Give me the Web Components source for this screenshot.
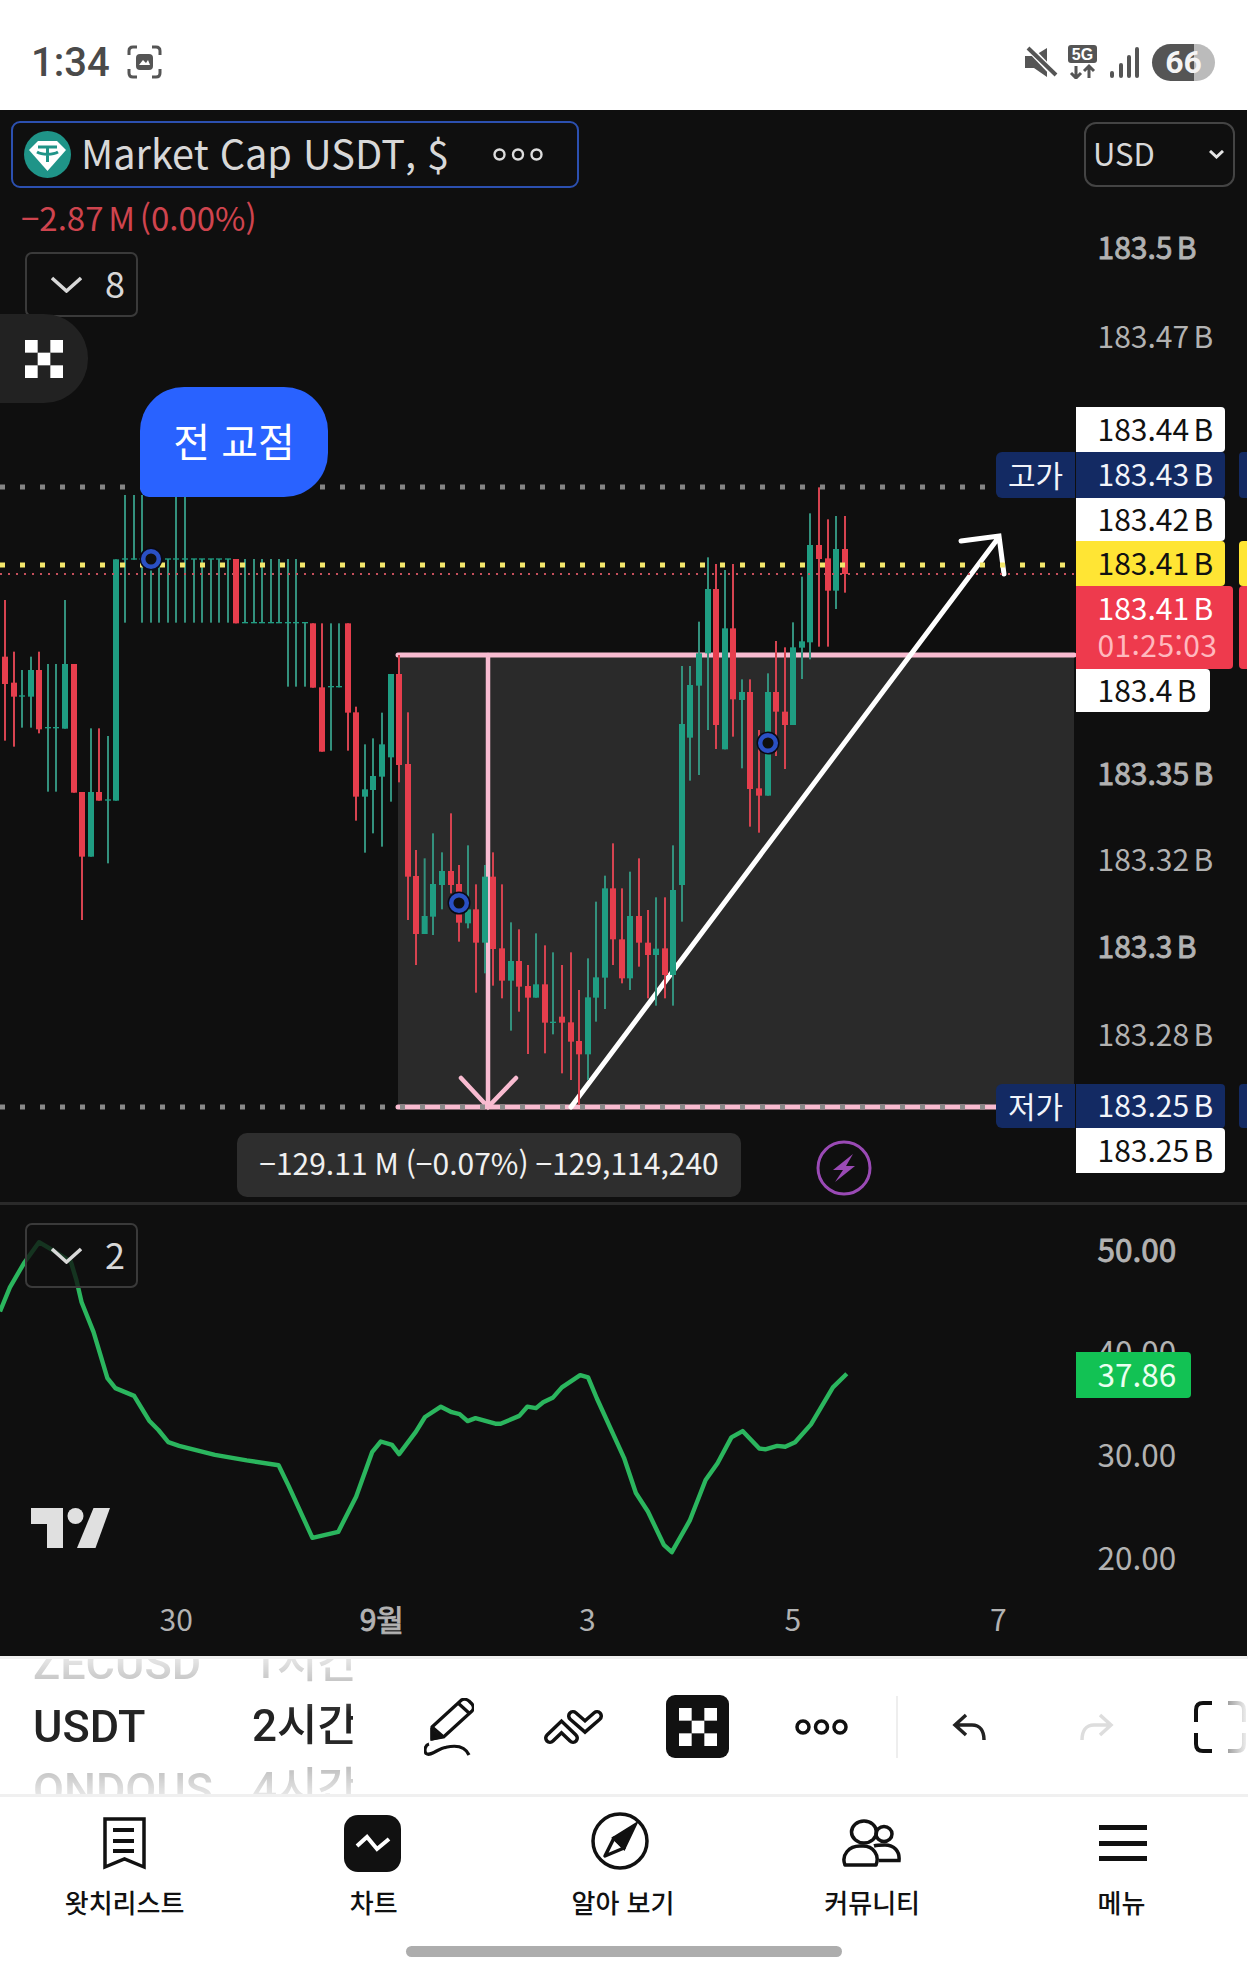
<!DOCTYPE html>
<html lang="ko">
<head>
<meta charset="utf-8">
<title>Market Cap USDT</title>
<style>
  html, body { margin: 0; background: #fff; }
  body { width: 1248px; font-family: "Noto Sans CJK KR", "Noto Sans", sans-serif; }
</style>
</head>
<body>
<status-bar></status-bar>
<chart-screen>
  <main-pane>
    <price-axis slot="axis">
      <currency-select></currency-select>
      <price-tag strong style="margin-top:39px">183.5 B</price-tag>
      <price-tag style="margin-top:45px">183.47 B</price-tag>
      <price-tag kind="white" h="45" style="margin-top:48px">183.44 B</price-tag>
      <price-tag kind="blue" h="46" side="고가" mark>183.43 B</price-tag>
      <price-tag kind="white" h="43">183.42 B</price-tag>
      <price-tag kind="yellow" h="45" mark>183.41 B</price-tag>
      <price-tag kind="red" h="83" w="157" sub="01:25:03" mark>183.41 B</price-tag>
      <price-tag kind="white" h="43" w="134">183.4 B</price-tag>
      <price-tag strong style="margin-top:40px">183.35 B</price-tag>
      <price-tag style="margin-top:42px">183.32 B</price-tag>
      <price-tag strong style="margin-top:43px">183.3 B</price-tag>
      <price-tag style="margin-top:44px">183.28 B</price-tag>
      <price-tag kind="blue" h="44" side="저가" mark style="margin-top:27px">183.25 B</price-tag>
      <price-tag kind="white" h="45">183.25 B</price-tag>
    </price-axis>
  </main-pane>
  <rsi-pane>
    <price-axis slot="axis" style="--tag-font:31.5px">
      <price-tag strong style="margin-top:23px">50.00</price-tag>
      <price-tag style="margin-top:58px">40.00</price-tag>
      <price-tag kind="green" h="46" w="115" style="position:absolute;top:147px;left:0">37.86</price-tag>
      <price-tag style="margin-top:59px">30.00</price-tag>
      <price-tag style="margin-top:59px">20.00</price-tag>
    </price-axis>
  </rsi-pane>
  <time-axis>
    <span>30</span><span class="b">9월</span><span>3</span><span>5</span><span>7</span>
  </time-axis>
</chart-screen>
<draw-toolbar></draw-toolbar>
<tab-bar>
  <tab-item label="왓치리스트">
    <svg width="43" height="53" viewBox="0 0 43 53" fill="none" stroke="#111"><path d="M2 2H41V50L21.5 42 2 50Z" stroke-width="3.5"/><path d="M10 13H31M10 24H31M10 34H31" stroke-width="4"/></svg>
  </tab-item>
  <tab-item label="차트">
    <svg style="margin-right:2px" width="57" height="57" viewBox="0 0 57 57"><rect width="57" height="57" rx="14" fill="#111"/><path d="M13 31 23 22 33 34 45 24" fill="none" stroke="#fff" stroke-width="4"/></svg>
  </tab-item>
  <tab-item label="알아 보기">
    <svg style="margin:0 5px 5px 0" width="58" height="58" viewBox="0 0 58 58" fill="none" stroke="#111" stroke-width="3.5"><circle cx="29" cy="29" r="27"/><path d="M44 13 23 26 33 36Z" fill="#111"/><path d="M23 26 14 44 33 36Z" stroke-linejoin="round"/></svg>
  </tab-item>
  <tab-item label="커뮤니티">
    <svg style="margin-right:2px" width="60" height="48" viewBox="0 0 60 48" fill="none" stroke="#111" stroke-width="3.5"><ellipse cx="23" cy="13" rx="12.5" ry="11"/><ellipse cx="43" cy="15" rx="8" ry="7.5"/><path d="M4 46C0 36 8 27 19 27H22C32 27 39 36 35 46Z" stroke-linejoin="round"/><path d="M33 27C36 26 39 26 44 26 53 26 59 32 58 41.5H38"/></svg>
  </tab-item>
  <tab-item label="메뉴">
    <svg style="margin-left:3px" width="48" height="37" viewBox="0 0 48 37" fill="#111"><rect width="48" height="5"/><rect y="16" width="48" height="5"/><rect y="31" width="48" height="5"/></svg>
  </tab-item>
</tab-bar>
<script>
const OKX_SQUARES = '<rect width="1" height="1"/><rect x="2" width="1" height="1"/><rect x="1" y="1" width="1" height="1"/><rect y="2" width="1" height="1"/><rect x="2" y="2" width="1" height="1"/>';

class StatusBar extends HTMLElement {
  connectedCallback() {
    this.attachShadow({ mode: 'open' }).innerHTML = `
    <style>
      :host { display: flex; align-items: center; height: 110px; background: #fff; color: #4a4a4a; box-sizing: border-box; padding: 14px 33px 0 31px; font-family: Roboto, sans-serif; }
      .time { font-size: 40px; font-weight: 500; line-height: 48px; width: 96px; margin-top: 2px; }
      .right { margin-left: auto; display: flex; align-items: center; }
      .batt { position: relative; width: 63px; height: 37px; border-radius: 19px; margin-left: 13px; background: linear-gradient(to right, #555 42px, #bbb 42px); color: #f4f4f4; font: 700 32px/37px Roboto, sans-serif; text-align: center; }
    </style>
    <span class="time">1:34</span>
    <svg width="35" height="34" viewBox="0 0 35 34" fill="none" stroke="#555" stroke-width="3"><path d="M10 2H6Q2 2 2 6V10M25 2H29Q33 2 33 6V10M2 24V28Q2 32 6 32H10M33 24V28Q33 32 29 32H25"/><rect x="9" y="9" width="17" height="16" rx="4" fill="#555" stroke="none"/><path d="M12 20 16 15 19 18 21 15 23 20Z" fill="#fff" stroke="none"/></svg>
    <div class="right">
      <svg width="33" height="33" viewBox="0 0 33 33"><path d="M0 10H9L22 2V31L9 22H0Z" fill="#555"/><path d="M3 1 31 30" stroke="#fff" stroke-width="7"/><path d="M3 2 31 29" stroke="#555" stroke-width="4"/></svg>
      <svg style="margin-left:10px" width="30" height="34" viewBox="0 0 30 34"><rect width="29" height="18" rx="3" fill="#555"/><text x="14.5" y="15" font-family="Liberation Sans" font-weight="700" font-size="16" fill="#fff" text-anchor="middle">5G</text><path d="M8 21V33M3 28 8 33 13 28M21 33V21M16 26 21 21 26 26" fill="none" stroke="#555" stroke-width="3"/></svg>
      <svg style="margin-left:12px" width="29" height="31" viewBox="0 0 29 31" fill="#555"><rect y="24" width="4" height="7" rx="2"/><rect x="9" y="16" width="4" height="15" rx="2"/><rect x="17" y="8" width="4" height="23" rx="2"/><rect x="25" width="4" height="31" rx="2"/></svg>
      <div class="batt">66</div>
    </div>`;
  }
}

class ChartScreen extends HTMLElement {
  connectedCallback() {
    this.attachShadow({ mode: 'open' }).innerHTML = `
    <style>
      :host { display: block; width: 1247px; background: #0f0f0f; }
      ::slotted(rsi-pane) { border-top: 3px solid #2a2a2a; }
    </style>
    <slot></slot>`;
  }
}

class CollapseChip extends HTMLElement {
  connectedCallback() {
    this.attachShadow({ mode: 'open' }).innerHTML = `
    <style>
      :host { display: flex; align-items: center; box-sizing: border-box; width: 113px; height: 65px; border: 2px solid #3a3a3a; border-radius: 7px; padding-left: 24px; color: #d8d8d8; font-size: 36px; }
      span { margin: 0 0 5px 23px; }
    </style>
    <svg width="31" height="17" viewBox="0 0 31 17" fill="none" stroke="#d8d8d8" stroke-width="3.5"><path d="M1 2 15.500 15 30 2"/></svg>
    <span><slot></slot></span>`;
  }
}

class ChartLegend extends HTMLElement {
  connectedCallback() {
    this.attachShadow({ mode: 'open' }).innerHTML = `
    <style>
      :host { display: block; position: absolute; left: 0; top: 0; padding: 11px 0 0 11px; }
      .box { display: flex; align-items: center; box-sizing: border-box; width: 568px; height: 67px; border: 2px solid #2c50b0; border-radius: 9px; padding: 0 34px 0 11px; color: #d8d8d8; font-size: 39.700px; }
      .box span { margin: 0 0 6px 10px; white-space: nowrap; }
      .box .more { margin-left: auto; }
      .change { height: 64px; line-height: 58px; margin-left: 10px; color: #cf444e; font-size: 33px; word-spacing: -4.500px; }
      collapse-chip { margin-left: 14px; }
      .float { display: flex; align-items: center; box-sizing: border-box; margin: -3px 0 0 -11px; width: 88px; height: 89px; padding-left: 25px; background: #222; border-radius: 0 44px 44px 0; }
    </style>
    <div class="box">
      <svg width="47" height="47" viewBox="0 0 47 47"><circle cx="23.500" cy="23.500" r="23.500" fill="#1f9488"/><path d="M14 10H33L42 19 23.500 40 5 19Z" fill="#fff"/><path d="M14 16H33M23.500 16V31M13 21C18 24 29 24 34 21" fill="none" stroke="#1f9488" stroke-width="3"/></svg>
      <span>Market Cap USDT, $</span>
      <svg class="more" width="50" height="13" viewBox="0 0 50 13" fill="none" stroke="#ddd" stroke-width="2.400"><circle cx="6.500" cy="6.500" r="5"/><circle cx="25" cy="6.500" r="5"/><circle cx="43.500" cy="6.500" r="5"/></svg>
    </div>
    <div class="change">−2.87 M (0.00%)</div>
    <collapse-chip>8</collapse-chip>
    <div class="float"><svg width="38" height="38" viewBox="0 0 3 3" fill="#fff">${OKX_SQUARES}</svg></div>`;
  }
}

class CurrencySelect extends HTMLElement {
  connectedCallback() {
    this.attachShadow({ mode: 'open' }).innerHTML = `
    <style>
      :host { display: flex; align-items: center; justify-content: space-between; box-sizing: border-box; width: 151px; height: 65px; margin: 12px 0 0 8px; padding: 0 9px 0 7px; border: 2px solid #444; border-radius: 12px; color: #d8d8d8; font-size: 31px; }
      span { margin-bottom: 5px; }
    </style>
    <span>USD</span>
    <svg width="15" height="9" viewBox="0 0 15 9" fill="none" stroke="#e4e4e4" stroke-width="3"><path d="M1 1 7.500 7 14 1"/></svg>`;
  }
}

class PriceAxis extends HTMLElement {
  connectedCallback() {
    this.attachShadow({ mode: 'open' }).innerHTML = `
    <style>
      :host { display: block; position: relative; width: 171px; }
    </style>
    <slot></slot>`;
  }
}

class PriceTag extends HTMLElement {
  connectedCallback() {
    const kinds = {
      white: 'background:#fff;color:#111',
      blue: 'background:#132a63;color:#f2f4fa',
      yellow: 'background:#ffe534;color:#111',
      red: 'background:#ee3a4d;color:#fff',
      green: 'background:#12c254;color:#eafff0',
    };
    const kind = this.getAttribute('kind');
    const h = this.getAttribute('h') || 44;
    const w = this.getAttribute('w') || 149;
    const side = this.getAttribute('side');
    const sub = this.getAttribute('sub');
    const bg = kind ? kinds[kind].split(';')[0].split(':')[1] : 'none';
    this.attachShadow({ mode: 'open' }).innerHTML = `
    <style>
      :host { display: block; position: relative; box-sizing: border-box; width: ${w}px; height: ${h}px; }
      .face { display: flex; flex-direction: column; justify-content: center; box-sizing: border-box; width: 100%; height: 100%; padding: 0 0 3px 21.500px; border-radius: ${kind ? '0 4px 4px 0' : '0'}; font-size: var(--tag-font, 30px); line-height: 37px; word-spacing: -4px; white-space: nowrap; color: #b2b2b2; ${this.hasAttribute('strong') ? '-webkit-text-stroke: .9px currentColor;' : ''} ${kind ? kinds[kind] : ''} }
      .sub { color: #ffb8be; letter-spacing: .4px; }
      .side { position: absolute; right: 100%; top: 0; width: 79px; height: 100%; margin-right: 1px; padding-bottom: 3px; box-sizing: border-box; display: flex; align-items: center; justify-content: center; border-radius: 6px 0 0 6px; background: ${bg}; color: #f2f4fa; font-size: 30px; }
      .mark { position: absolute; left: 163px; top: 0; width: 8px; height: 100%; border-radius: 4px 0 0 4px; background: ${bg}; }
    </style>
    ${side ? `<div class="side">${side}</div>` : ''}
    <div class="face"><div><slot></slot></div>${sub ? `<div class="sub">${sub}</div>` : ''}</div>
    ${this.hasAttribute('mark') ? '<div class="mark"></div>' : ''}`;
  }
}

// y values are read off the zoomed crops, so each group keeps its crop origin
const CANDLES = [
  [0, 470, [
    [15,'r',390,560,642,812],[42,'r',545,638,680,830],[66,'g',600,676,680,773],[93,'g',560,600,680,773],
    [117,'r',545,600,778,790],[144,'g',582,771,775,965],[168,'g',582,771,775,965],[195,'g',390,582,776,776],
    [222,'r',582,582,968,968],[246,'r',966,966,1160,1350],[273,'g',775,966,1160,1160],[297,'r',775,966,992,992],
    [324,'g',798,988,992,1180],[348,'g',268,268,992,992],[375,'g',75,265,269,458],[402,'g',75,265,269,269],
    [426,'g',75,265,269,458],[453,'g',267,265,269,458],[477,'g',267,265,269,458],[504,'g',267,265,269,458],
    [528,'g',80,265,269,458],[555,'g',80,265,269,458],[582,'g',267,265,269,458],[606,'g',267,265,269,458],
    [633,'g',267,265,269,458],[657,'g',267,265,269,458],[684,'g',267,265,269,458],[708,'r',267,267,460,460],
    [735,'g',267,456,460,458],[762,'g',267,456,460,458],[786,'g',267,456,460,458],[813,'g',267,456,460,458],
    [837,'g',267,456,460,458],[864,'g',267,456,460,650],[888,'g',267,456,460,650],[915,'g',458,456,460,650],
    [939,'r',460,460,653,653],[966,'r',460,652,845,845],[993,'g',460,648,652,842],[1017,'g',460,648,652,652],
    [1044,'r',460,460,728,842],[1068,'r',710,727,980,1052],[1095,'g',823,958,980,1148],[1119,'g',805,918,960,1090],
    [1146,'g',728,823,920,1130],[1173,'g',612,612,862,995],[1197,'r',555,612,885,937],
  ]],
  [380, 620, [
    [84,'r',277,432,770,900],[108,'r',690,768,942,1035],[134,'g',715,888,942,942],[159,'g',640,792,890,945],
    [186,'g',697,753,795,868],[213,'r',580,753,795,820],[237,'r',735,792,908,965],[264,'g',676,868,910,925],
    [288,'r',793,868,968,1118],[315,'g',735,770,968,1060],[339,'r',697,770,987,1097],[366,'r',793,985,1082,1135],
    [393,'g',907,1023,1082,1232],[417,'r',928,1023,1100,1175],[444,'r',1035,1098,1133,1302],[468,'g',940,1093,1133,1133],
    [495,'r',976,1093,1208,1300],[519,'g',997,1205,1209,1243],[546,'r',1035,1190,1208,1360],[573,'r',997,1207,1265,1380],
    [597,'r',1110,1263,1303,1455],[624,'g',1015,1132,1303,1380],[648,'g',845,1072,1133,1205],[675,'g',767,805,1073,1167],
    [699,'r',670,805,958,1035],[726,'r',805,958,1075,1090],[750,'g',755,888,1075,1110],[777,'r',715,888,968,1040],
    [804,'r',870,968,1005,1135],[828,'g',832,986,1005,1157],[855,'r',832,985,1065,1135],[879,'g',676,810,1065,1157],
    [906,'g',138,312,795,905],[930,'g',138,195,353,482],
  ]],
  [640, 470, [
    [177,'g',455,550,647,915],[204,'g',262,357,550,780],[228,'r',282,357,765,837],[255,'g',300,475,838,838],
    [279,'r',282,475,688,800],[306,'g',628,666,690,895],[330,'r',628,666,957,1070],[357,'r',780,955,977,1088],
    [384,'g',610,666,977,977],[408,'r',513,666,725,858],[435,'r',532,725,765,897],[459,'g',457,532,765,765],
    [486,'g',320,514,533,627],[510,'g',130,225,517,568],[537,'r',52,225,267,530],[564,'r',148,265,362,530],
    [588,'g',138,237,362,417],[615,'r',138,237,312,368],
  ]],
];

class CandleChart extends HTMLElement {
  connectedCallback() {
    let bars = '';
    for (const [ox, oy, list] of CANDLES) {
      for (const [x, c, hi, top, bot, lo] of list) {
        const px = ox + x / 3;
        const wick = c === 'g' ? '#33917d' : '#d64350';
        const body = c === 'g' ? '#1f9d82' : '#e63e4d';
        bars += `<rect x="${px - 1}" y="${oy + hi / 3}" width="2" height="${(lo - hi) / 3}" fill="${wick}"/>`;
        bars += `<rect x="${px - 3}" y="${oy + top / 3}" width="6" height="${Math.max(bot - top, 3) / 3}" fill="${body}"/>`;
      }
    }
    const marker = (x, y) => `<circle cx="${x}" cy="${y}" r="11.500" fill="#0a0a14"/><circle cx="${x}" cy="${y}" r="7.800" fill="#0f0f0f" stroke="#2a50c4" stroke-width="4.500"/>`;
    this.attachShadow({ mode: 'open' }).innerHTML = `
    <style>
      :host { display: block; position: absolute; left: 0; top: 0; }
      svg { display: block; }
    </style>
    <svg width="1076" height="1092" viewBox="0 110 1076 1092" fill="none">
      <rect x="398" y="655" width="676" height="452" fill="#2a2a2a"/>
      <path d="M398 655H1074" stroke="#f8bbd0" stroke-width="5" stroke-linecap="round"/>
      <path d="M398 1107H998" stroke="#f8bbd0" stroke-width="5" stroke-linecap="round"/>
      <path d="M488 655V1107M461 1078 488 1107 516 1078" stroke="#f8bbd0" stroke-width="4.500" stroke-linecap="round"/>
      <path d="M571 1107 999 537M961 541 999 536 1004 574" stroke="#fff" stroke-width="5" stroke-linecap="round"/>
      ${bars}
      <path d="M0 1107H998" stroke="#8a8a8a" stroke-width="5" stroke-dasharray="5 15"/>
      <path d="M0 487H985" stroke="#858585" stroke-width="5" stroke-dasharray="5 15"/>
      <path d="M0 574H1074" stroke="#c6505c" stroke-width="2" stroke-dasharray="2 6"/>
      <path d="M0 565H1074" stroke="#f4e86c" stroke-width="5" stroke-dasharray="5 15"/>
      ${marker(151, 559)}${marker(459, 903)}${marker(768, 743)}
    </svg>`;
  }
}

class MainPane extends HTMLElement {
  connectedCallback() {
    this.attachShadow({ mode: 'open' }).innerHTML = `
    <style>
      :host { display: grid; grid-template-columns: 1076px 171px; position: relative; height: 1092px; overflow: hidden; color: #fff; }
      .pin { position: absolute; left: 140px; top: 277px; width: 188px; height: 110px; display: flex; align-items: center; justify-content: center; box-sizing: border-box; padding-bottom: 5px; background: #2962ff; border-radius: 44px 44px 44px 9px; font-size: 40px; }
      .tip { position: absolute; left: 237px; top: 1023px; width: 504px; height: 64px; display: flex; align-items: center; justify-content: center; box-sizing: border-box; padding-bottom: 6px; background: #2e2e2e; border-radius: 10px; color: #f0f0f0; font-size: 30px; word-spacing: -1.500px; white-space: nowrap; }
      .bolt { position: absolute; left: 816px; top: 1030px; }
    </style>
    <div class="canvas"><candle-chart></candle-chart></div>
    <slot name="axis"></slot>
    <chart-legend></chart-legend>
    <div class="pin">전 교점</div>
    <div class="tip">−129.11 M (−0.07%) −129,114,240</div>
    <svg class="bolt" width="56" height="56" viewBox="0 0 56 56"><circle cx="28" cy="28" r="26" fill="none" stroke="#9a4ab5" stroke-width="3"/><path d="M37 14 17 30H27L19 42 39 26H30Z" fill="#9a4ab5"/></svg>`;
  }
}

class RsiPane extends HTMLElement {
  connectedCallback() {
    // first run is in the left crop, second in the right one
    const left = [[0,625],[25,560],[60,495],[98,438],[130,458],[178,490],[192,540],[205,600],[235,680],[270,805],[290,832],[337,853],[375,920],[398,945],[423,978],[450,988],[540,1012],[620,1027],[700,1040],[725,1095],[785,1236],[850,1220],[895,1125],[935,1005],[957,976],[985,985],[1003,1010],[1045,950],[1068,910],[1108,882],[1135,897],[1155,902],[1175,921],[1195,913],[1245,928],[1258,928],[1305,907],[1325,882],[1347,886],[1365,870],[1390,857],[1412,830],[1458,797],[1478,803],[1500,860]];
    const right = [[0,1020],[30,1115],[60,1165],[100,1255],[120,1275],[165,1190],[205,1080],[235,1035],[270,965],[298,948],[340,995],[355,997],[385,988],[405,990],[430,978],[470,930],[525,830],[560,793]];
    const pts = left.map(([x, y]) => [x / 2.513, y / 2.7 + 1080])
      .concat(right.map(([x, y]) => [624 + x / 2.513, y / 2.7 + 1080]))
      .map(p => p[0].toFixed(1) + ' ' + p[1].toFixed(1)).join(' ');
    this.attachShadow({ mode: 'open' }).innerHTML = `
    <style>
      :host { display: grid; grid-template-columns: 1076px 171px; position: relative; height: 398px; box-sizing: border-box; color: #fff; }
      svg { display: block; }
      collapse-chip { position: absolute; left: 25px; top: 18px; background: rgba(15,15,15,.78); }
      .logo { position: absolute; left: 31px; top: 303px; }
    </style>
    <svg width="1076" height="395" viewBox="0 1205 1076 395"><polyline points="${pts}" fill="none" stroke="#2bb65e" stroke-width="4.400" stroke-linejoin="round"/></svg>
    <slot name="axis"></slot>
    <collapse-chip>2</collapse-chip>
    <svg class="logo" width="79" height="40" viewBox="0 0 79 40" fill="#e0e0e0"><path d="M0 0H32V40H16V16H0Z"/><circle cx="44.500" cy="8" r="8"/><path d="M62.500 0H79L64.500 40H46Z"/></svg>`;
  }
}

class TimeAxis extends HTMLElement {
  connectedCallback() {
    this.attachShadow({ mode: 'open' }).innerHTML = `
    <style>
      :host { display: flex; height: 56px; padding-left: 73.500px; color: #b2b2b2; font-size: 30px; line-height: 36px; }
      ::slotted(span) { width: 205.500px; text-align: center; }
      ::slotted(.b) { -webkit-text-stroke: .9px currentColor; }
    </style>
    <slot></slot>`;
  }
}

class DrawToolbar extends HTMLElement {
  connectedCallback() {
    this.attachShadow({ mode: 'open' }).innerHTML = `
    <style>
      :host { display: flex; align-items: center; box-sizing: border-box; height: 141px; border-top: 3px solid #f0f0f0; border-bottom: 3px solid #f0f0f0; padding-left: 33px; background: #fff; overflow: hidden; }
      .wheel { display: flex; flex-direction: column; justify-content: center; flex: none; height: 135px; overflow: hidden; font: 500 45px/63px Roboto, "Noto Sans CJK KR", sans-serif; color: #999; white-space: nowrap;
        -webkit-mask-image: linear-gradient(to bottom, rgba(0,0,0,.25), #000 40%, #000 60%, rgba(0,0,0,.25));
        mask-image: linear-gradient(to bottom, rgba(0,0,0,.25), #000 40%, #000 60%, rgba(0,0,0,.25)); }
      .wheel div { flex: none; height: 63px; }
      .wheel .on { color: #222; }
      .sym { width: 219px; }
      .res { width: 101px; font-size: 44px; }
      svg { flex: none; display: block; }
      .sep { flex: none; width: 2px; height: 62px; margin-left: 48px; background: #eee; }
    </style>
    <div class="wheel sym"><div>ZECUSD</div><div class="on">USDT</div><div>ONDOUS</div></div>
    <div class="wheel res"><div>1시간</div><div class="on">2시간</div><div>4시간</div></div>
    <svg style="margin-left:71px" width="50" height="58" viewBox="0 0 50 58" fill="none" stroke="#111" stroke-width="3.200"><path d="M8 41V29L37.500 2Q41 0 45 3L48 6Q51 10 48 13L19.500 39Z" stroke-linejoin="round"/><path d="M8 29 19.500 39M34 5 45 15"/><path d="M8 33V41L16 39Z" fill="#111"/><path d="M5 46C1 47 0 53 2 55.500 7 59 14 50 22 49.300 32 47 41 48 45 57"/></svg>
    <svg style="margin-left:68px" width="61" height="36" viewBox="0 0 61 36" fill="none" stroke-linecap="round"><path d="M8 29 19.500 18 31 29" stroke="#111" stroke-width="12"/><path d="M8 29 19.500 18 31 29" stroke="#fff" stroke-width="5"/><path d="M31 7 43 17.500 55 7" stroke="#111" stroke-width="12"/><path d="M31 7 43 17.500 55 7" stroke="#fff" stroke-width="5"/></svg>
    <div style="margin-left:63px;width:63px;height:63px;flex:none;display:flex;align-items:center;justify-content:center;background:#111;border-radius:9px"><svg width="38" height="38" viewBox="0 0 3 3" fill="#fff">${OKX_SQUARES}</svg></div>
    <svg style="margin-left:66px" width="53" height="16" viewBox="0 0 53 16" fill="none" stroke="#111" stroke-width="3.500"><circle cx="8" cy="8" r="6"/><circle cx="26.500" cy="8" r="6"/><circle cx="45" cy="8" r="6"/></svg>
    <div class="sep"></div>
    <svg style="margin-left:54px" width="34" height="28" viewBox="0 0 34 28" fill="none" stroke="#222" stroke-width="3.500"><path d="M14 2 3 12 14 22M3 12H20C28 12 32 18 32 27"/></svg>
    <svg style="margin-left:94px" width="34" height="28" viewBox="0 0 34 28" fill="none" stroke="#ddd" stroke-width="3.500"><path d="M20 2 31 12 20 22M31 12H14C6 12 2 18 2 27"/></svg>
    <svg style="margin-left:80px" width="52" height="52" viewBox="0 0 52 52" fill="none" stroke-width="4"><defs><linearGradient id="fade" gradientUnits="userSpaceOnUse" x1="32" y1="0" x2="52" y2="0"><stop offset="0" stop-color="#999"/><stop offset="1" stop-color="#ececec"/></linearGradient></defs><path d="M18 2H9Q2 2 2 9V21M2 32V43Q2 50 9 50H18" stroke="#111"/><path d="M34 2H43Q50 2 50 9V21M50 32V43Q50 50 43 50H34" stroke="url(#fade)"/></svg>`;
  }
}

class TabBar extends HTMLElement {
  connectedCallback() {
    this.attachShadow({ mode: 'open' }).innerHTML = `
    <style>
      :host { display: block; height: 175px; background: #fff; }
      .tabs { display: grid; grid-template-columns: repeat(5, 1fr); width: 1246px; }
      .home { width: 436px; height: 11px; margin: 26px auto 0 406px; border-radius: 6px; background: #adadad; }
    </style>
    <div class="tabs"><slot></slot></div>
    <div class="home"></div>`;
  }
}

class TabItem extends HTMLElement {
  connectedCallback() {
    this.attachShadow({ mode: 'open' }).innerHTML = `
    <style>
      :host { display: flex; flex-direction: column; align-items: center; color: #111; font-size: 26px; font-weight: 500; line-height: 36px; }
      .icon { display: flex; align-items: center; justify-content: center; height: 92px; margin-bottom: -5px; }
    </style>
    <div class="icon"><slot></slot></div>
    <div class="label">${this.getAttribute('label')}</div>`;
  }
}

customElements.define('status-bar', StatusBar);
customElements.define('chart-screen', ChartScreen);
customElements.define('collapse-chip', CollapseChip);
customElements.define('chart-legend', ChartLegend);
customElements.define('currency-select', CurrencySelect);
customElements.define('price-axis', PriceAxis);
customElements.define('price-tag', PriceTag);
customElements.define('candle-chart', CandleChart);
customElements.define('main-pane', MainPane);
customElements.define('rsi-pane', RsiPane);
customElements.define('time-axis', TimeAxis);
customElements.define('draw-toolbar', DrawToolbar);
customElements.define('tab-bar', TabBar);
customElements.define('tab-item', TabItem);
</script>
</body>
</html>
